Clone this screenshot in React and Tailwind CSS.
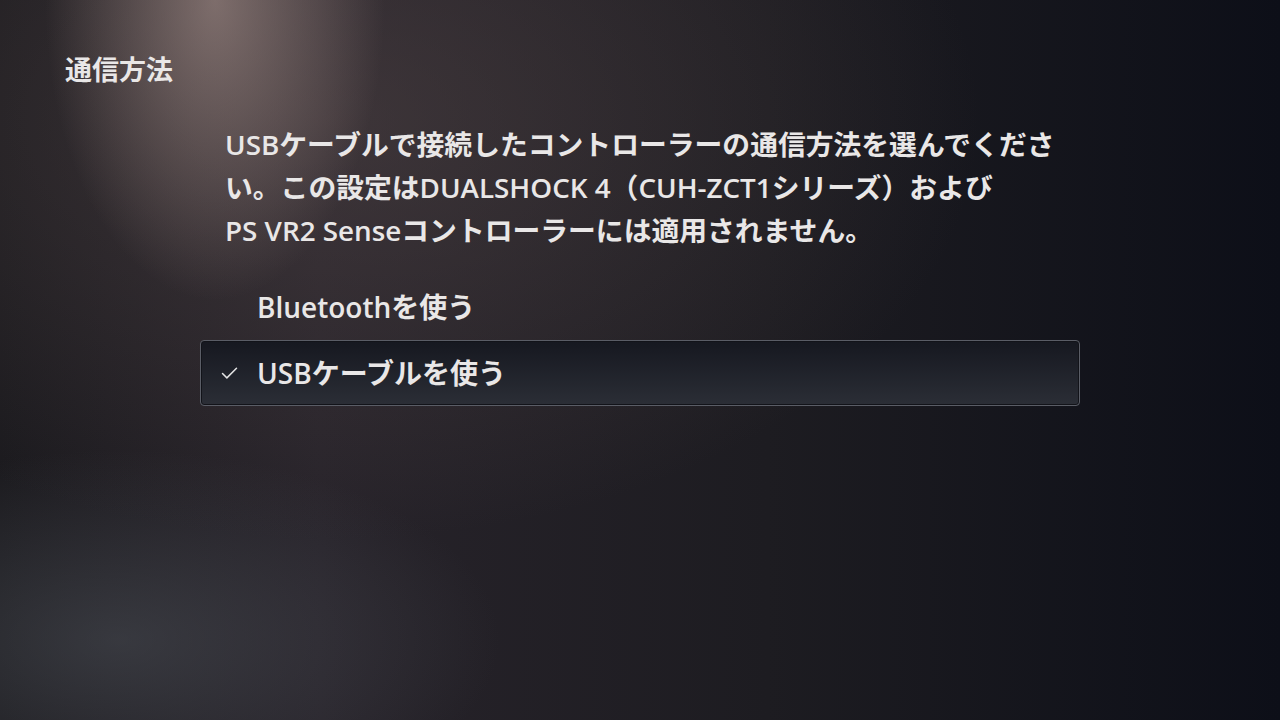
import { Check } from "lucide-react";

const font = "font-['Open_Sans','Noto_Sans_CJK_JP',sans-serif]";

export default function App() {
  return (
    <div
      className={`relative w-[1280px] h-[720px] overflow-hidden text-[#e9e7e7] ${font} bg-[radial-gradient(ellipse_170px_300px_at_215px_0px,rgba(175,152,146,0.6),transparent),radial-gradient(ellipse_650px_420px_at_330px_120px,rgba(90,76,76,0.45),transparent),radial-gradient(ellipse_380px_190px_at_120px_640px,rgba(85,90,98,0.45),transparent),linear-gradient(to_right,#1b1a1e_0%,#27232a_25%,#1d1c21_60%,#0d0f18_100%)]`}
    >
      <div className="pl-[65px] pt-[51px]">
        <h1 className="text-[27px] font-semibold leading-[38px]">通信方法</h1>
      </div>

      <div className="pl-[225px] pt-[34px]">
        <p className="text-[27.8px] font-semibold leading-[43px]">
          USBケーブルで接続したコントローラーの通信方法を選んでくださ
          <br />
          い。この設定はDUALSHOCK 4（CUH-ZCT1シリーズ）および
          <br />
          PS VR2 Senseコントローラーには適用されません。
        </p>
      </div>

      <div className="ml-[200px] mt-[22px] w-[880px] flex flex-col gap-[1px]">
        <div className="h-[65px] flex items-center pl-[57px] text-[28px] font-semibold">
          Bluetoothを使う
        </div>
        <div className="h-[66px] flex items-center rounded-[4px] border border-[#5a5d66] bg-gradient-to-b from-[#161820] to-[#2b2e36] shadow-[inset_0_0_0_1px_#121319]">
          <div className="w-[56px] flex justify-center pl-[1px]">
            <Check className="w-[21px] h-[21px] text-[#e4e4e4]" strokeWidth={1.7} />
          </div>
          <span className="text-[28px] font-semibold">USBケーブルを使う</span>
        </div>
      </div>
    </div>
  );
}
